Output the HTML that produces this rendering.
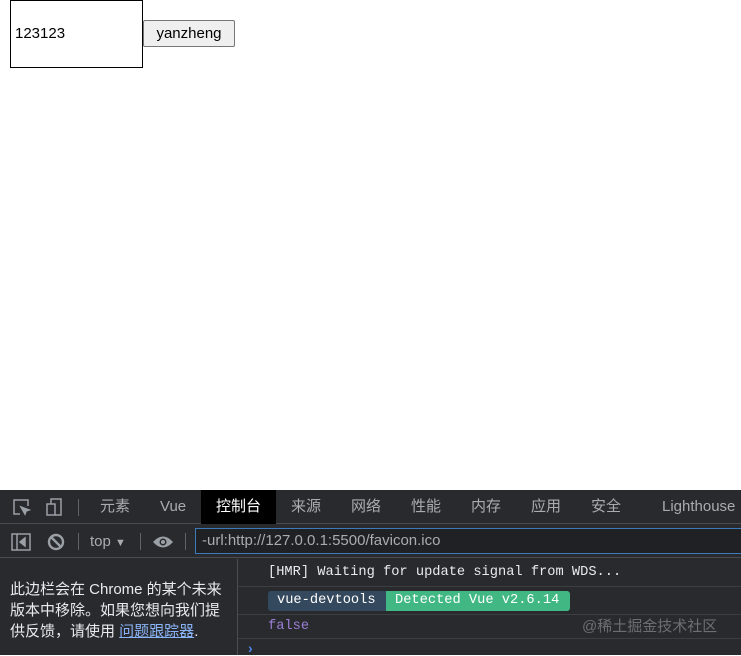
<!DOCTYPE html>
<html><head><style>
*{margin:0;padding:0;box-sizing:border-box}
body{width:741px;height:655px;background:#fff;position:relative;overflow:hidden;font-family:"Liberation Sans","Noto Sans CJK SC",sans-serif}
.a{position:absolute}
.dt{left:0;top:490px;width:741px;height:165px;background:#292a2d;color:#bdc1c6}
.tab{position:absolute;top:0;height:34px;line-height:34px;font-size:15px;color:#a8acb1}
.mono{font-family:"Liberation Mono","DejaVu Sans Mono",monospace;font-size:13.7px;white-space:nowrap}
</style></head><body>
<div class="a" style="left:10px;top:0;width:133px;height:68px;border:1px solid #000;font-size:15px;line-height:66px;padding-left:4px">123123</div>
<div class="a" style="left:143px;top:20px;width:92px;height:27px;border:1px solid #767676;background:#efefef;border-radius:2px;font-size:15px;text-align:center;line-height:25px">yanzheng</div>
<div class="a dt">
 <div class="a" style="left:0;top:0;width:741px;height:34px;border-bottom:1px solid #4a4c50"></div>
 <svg class="a" style="left:12px;top:8px" width="20" height="20" viewBox="0 0 20 20" fill="none" stroke="#9aa0a6" stroke-width="1.5"><path d="M8 16H2V2h14v6"/><path d="M9 9l8 3-3 1-1 3z" fill="#9aa0a6"/></svg>
 <svg class="a" style="left:44px;top:7px" width="20" height="20" viewBox="0 0 20 20" fill="none" stroke="#9aa0a6" stroke-width="1.5"><rect x="3" y="7" width="8" height="11"/><path d="M7 7V2h10v16h-6"/></svg>
 <div class="a" style="left:78px;top:9px;width:1px;height:17px;background:#5f6368"></div>
 <div class="tab" style="left:100px">元素</div>
 <div class="tab" style="left:160px">Vue</div>
 <div class="tab" style="left:201px;width:75px;background:#000;color:#fff;text-align:center">控制台</div>
 <div class="tab" style="left:291px">来源</div>
 <div class="tab" style="left:351px">网络</div>
 <div class="tab" style="left:411px">性能</div>
 <div class="tab" style="left:471px">内存</div>
 <div class="tab" style="left:531px">应用</div>
 <div class="tab" style="left:591px">安全</div>
 <div class="tab" style="left:662px">Lighthouse</div>
 <div class="a" style="left:0;top:35px;width:741px;height:33px;border-bottom:1px solid #4a4c50"></div>
 <svg class="a" style="left:11px;top:43px" width="20" height="18" viewBox="0 0 20 18" fill="none" stroke="#9aa0a6" stroke-width="1.5"><rect x="1" y="1" width="18" height="16"/><path d="M6 1v16"/><path d="M14 5l-5 4 5 4z" fill="#9aa0a6"/></svg>
 <svg class="a" style="left:47px;top:43px" width="18" height="18" viewBox="0 0 18 18" fill="none" stroke="#9aa0a6" stroke-width="2.4"><circle cx="9" cy="9" r="7"/><path d="M4 4l10 10"/></svg>
 <div class="a" style="left:78px;top:43px;width:1px;height:17px;background:#5f6368"></div>
 <div class="a" style="left:90px;top:43px;font-size:15px;color:#a8acb1">top <span style="font-size:11px">▼</span></div>
 <div class="a" style="left:140px;top:43px;width:1px;height:17px;background:#5f6368"></div>
 <svg class="a" style="left:152px;top:44px" width="22" height="16" viewBox="0 0 22 16"><path d="M1 8Q11-3 21 8Q11 19 1 8z" fill="#9aa0a6"/><circle cx="11" cy="8" r="3.5" fill="#292a2d"/><circle cx="11" cy="8" r="2" fill="#9aa0a6"/></svg>
 <div class="a" style="left:185px;top:43px;width:1px;height:17px;background:#5f6368"></div>
 <div class="a" style="left:195px;top:38px;width:546px;height:26px;border-top:1px solid #3d7ab8;border-bottom:1px solid #3d7ab8;border-left:1px solid #3d7ab8;background:#202124;font-size:15px;line-height:24px;padding-left:6px;color:#a8acb1">-url:http://127.0.0.1:5500/favicon.ico</div>
 <div class="a" style="left:237px;top:69px;width:1px;height:96px;background:#4a4c50"></div>
 <div class="a" style="left:10px;top:89px;width:230px;font-size:15px;line-height:21px;color:#e8eaed;white-space:nowrap">此边栏会在 Chrome 的某个未来<br>版本中移除。如果您想向我们提<br>供反馈，请使用 <span style="color:#8ab4f8;text-decoration:underline">问题跟踪器</span>.</div>
 <div class="a mono" style="left:268px;top:75px;color:#e8eaed">[HMR] Waiting for update signal from WDS...</div>
 <div class="a" style="left:238px;top:96px;width:503px;height:1px;background:#3c3e42"></div>
 <div class="a mono" style="left:268px;top:101px;height:20px;line-height:20px;background:#35495e;color:#fff;padding:0 9px;border-radius:3px 0 0 3px;width:118px">vue-devtools</div>
 <div class="a mono" style="left:386px;top:101px;height:20px;line-height:20px;background:#41b883;color:#fff;padding:0 9px;border-radius:0 3px 3px 0;width:184px">Detected Vue v2.6.14</div>
 <div class="a" style="left:238px;top:124px;width:503px;height:1px;background:#3c3e42"></div>
 <div class="a mono" style="left:268px;top:129px;color:#9a7fd5">false</div>
 <div class="a" style="left:582px;top:125px;font-size:15px;color:#6b6e73">@稀土掘金技术社区</div>
 <div class="a" style="left:238px;top:148px;width:503px;height:1px;background:#3c3e42"></div>
 <div class="a" style="left:248px;top:150px;color:#4c8bf5;font-size:14px;font-weight:bold">›</div>
</div>
</body></html>
